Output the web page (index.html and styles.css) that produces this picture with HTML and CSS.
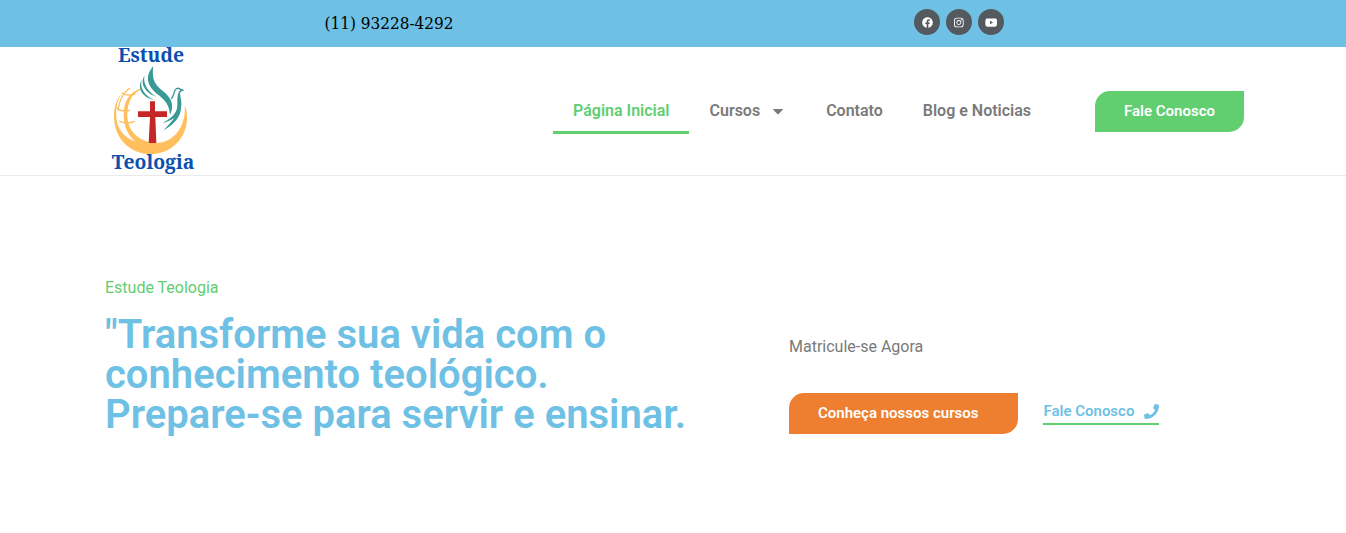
FILE: index.html
```html
<!DOCTYPE html>
<html lang="pt-BR">
<head>
<meta charset="utf-8">
<meta name="viewport" content="width=device-width, initial-scale=1">
<title>Estude Teologia</title>
<link rel="stylesheet" href="styles.css">
</head>
<body>
<div class="topbar">
  <div class="container topbar-grid">
    <a class="phone" href="tel:+5511932284292">(11) 93228-4292</a>
    <div class="social">
      <a href="#" aria-label="Facebook"><svg viewBox="0 0 512 512"><path d="M504 256C504 119 393 8 256 8S8 119 8 256c0 123.800 90.700 226.400 209.300 245V327.700h-63V256h63v-54.600c0-62.200 37-96.500 93.700-96.500 27.100 0 55.500 4.800 55.500 4.800v61h-31.300c-30.800 0-40.400 19.100-40.400 38.700V256h68.800l-11 71.700h-57.800V501C413.300 482.400 504 379.800 504 256z"/></svg></a>
      <a href="#" aria-label="Instagram"><svg viewBox="0 0 448 512"><path fill-rule="evenodd" d="M132 32h184a132 132 0 0 1 132 132v184a132 132 0 0 1-132 132H132A132 132 0 0 1 0 348V164A132 132 0 0 1 132 32zm4 40a95 95 0 0 0-95 95v178a95 95 0 0 0 95 95h176a95 95 0 0 0 95-95V167a95 95 0 0 0-95-95zM224 141a115 115 0 1 1 0 230 115 115 0 0 1 0-230zm0 40a75 75 0 1 0 0 150 75 75 0 0 0 0-150z"/><circle cx="344" cy="136" r="27"/></svg></a>
      <a href="#" aria-label="YouTube"><svg viewBox="0 0 576 512"><path fill-rule="evenodd" d="M549.700 124.100c-6.300-23.700-24.800-42.300-48.300-48.600C458.800 64 288 64 288 64S117.200 64 74.600 75.500c-23.500 6.300-42 24.900-48.300 48.600C15 167 15 256.400 15 256.400s0 89.400 11.400 132.300c6.300 23.700 24.800 41.500 48.300 47.800C117.200 448 288 448 288 448s170.800 0 213.400-11.500c23.500-6.300 42-24.200 48.300-47.800C561 345.800 561 256.400 561 256.400s0-89.400-11.300-132.300zM232 337.600V175.200l142.700 81.200z"/></svg></a>
    </div>
  </div>
</div>
<header class="header">
  <div class="container header-row">
    <a class="logo" href="#" aria-label="Estude Teologia">
      <svg viewBox="0 0 285 384">
        <text class="logo-text" x="138" y="44" text-anchor="middle">Estude</text>
        <g transform="translate(9 39)">
          <g fill="none" stroke="#ffbf5c" stroke-width="4">
            <path d="M65 84C44 100 33 124 30 152M96 88C72 97 57 119 51 145"/>
            <path d="M42 99C53 106 69 107 83 101M27 142C34 153 52 154 66 151M34 183C43 190 65 190 80 184"/>
          </g>
          <path fill="#ffbf5c" d="M48 92C28 110 17 139 18 173C20 238 68 282 128 282C190 282 237 234 237 173Q238 152 230 135C236 200 196 248 145 249C93 248 58 212 58 166C58 130 70 102 97 87C64 97 46 126 47 166C47 202 62 229 84 246C47 231 27 207 25 170C23 137 31 109 48 92Z"/>
          <path fill="#379a97" d="M136 18C130 64 143 75 171 98C192 118 199 138 186 165C184 137 174 124 153 106C123 84 105 54 136 18Z"/>
          <path fill="#379a97" d="M102 58C93 83 109 105 137 120C108 113 84 89 102 58ZM109 47C105 73 120 94 145 110C116 101 94 74 109 47Z"/>
          <path fill="none" stroke="#379a97" stroke-width="4" d="M190 116C201 105 195 88 208 85C214 83 218 91 227 91"/>
          <path fill="#379a97" d="M227 89L216 98C216 113 224 127 218 146C213 168 194 181 163 189C194 173 208 157 208 135C208 119 207 103 216 91ZM219 143C219 168 200 193 166 211C190 187 202 171 219 143Z"/>
          <path fill="#c42725" d="M126 124H141V154H177V171H142L145 249H122L126 171H90V154H126Z"/>
        </g>
        <text class="logo-text" x="144" y="365" text-anchor="middle">Teologia</text>
      </svg>
    </a>
    <nav class="nav">
      <a class="active" href="#">Página Inicial</a>
      <a href="#">Cursos <svg class="caret" viewBox="0 0 10 6"><path d="M1 0H9Q10.500 0 9.500 1L5.700 5Q5 5.700 4.300 5L.5 1Q-.5 0 1 0Z"/></svg></a>
      <a href="#">Contato</a>
      <a href="#">Blog e Noticias</a>
    </nav>
    <a class="btn btn-green" href="#">Fale Conosco</a>
  </div>
</header>
<main class="container hero">
  <section class="hero-copy">
    <p class="eyebrow">Estude Teologia</p>
    <h1>"Transforme sua vida com o conhecimento teológico. Prepare-se para servir e ensinar.</h1>
  </section>
  <section class="hero-cta">
    <p class="enroll">Matricule-se Agora</p>
    <div class="actions">
      <a class="btn btn-orange" href="#">Conheça nossos cursos</a>
      <a class="contact" href="#">Fale Conosco <svg viewBox="0 0 512 512"><path d="M493.400 24.600l-104-24c-11.300-2.600-22.900 3.300-27.500 13.900l-48 112c-4.200 9.800-1.400 21.300 6.900 28l60.600 49.600c-36 76.700-98.900 140.500-177.200 177.200l-49.600-60.600c-6.800-8.300-18.200-11.100-28-6.900l-112 48C3.900 366.500-2 378.100.6 389.400l24 104C27.100 504.200 36.700 512 48 512c256.100 0 464-207.500 464-464 0-11.200-7.700-20.900-18.600-23.400z"/></svg></a>
    </div>
  </section>
</main>
</body>
</html>
```
FILE: styles.css
```css
* { box-sizing: border-box; }
body { margin: 0; background: #fff; color: #7a7a7a; font: 400 16px/24px Roboto, sans-serif; }
a { color: inherit; text-decoration: none; }
p, h1 { margin: 0; }
svg { display: block; fill: currentColor; }
.container { width: 100%; max-width: 1142px; margin: 0 auto; padding-left: 2px; }

.topbar { background: #6ec1e4; }
.topbar-grid { display: grid; grid-template-columns: 1fr 1fr; justify-items: center; padding-top: 9px; padding-bottom: 12px; }
.phone { color: #000; font: 300 17px/28px "Roboto Slab", "DejaVu Serif Condensed", "DejaVu Serif", serif; height: 26px; }
.social { display: flex; gap: 6px; }
.social a { display: grid; place-items: center; width: 26px; height: 26px; border-radius: 50%; background: #54595f; color: #fff; }
.social svg { height: 11px; }

.header { border-bottom: 1px solid #eaeaea; }
.header-row { display: flex; align-items: center; }
.logo { margin-right: auto; padding-left: 1px; }
.logo svg { width: 95px; height: 128px; overflow: visible; }
.logo-text { fill: #0b4fb0; font: 700 58px "Noto Serif", "DejaVu Serif Condensed", "DejaVu Serif", serif; }
.nav { display: flex; margin-right: 44px; font-weight: 600; }
.nav a { display: flex; align-items: center; padding: 10px 20px 8px; border-bottom: 3px solid transparent; }
.nav .active { color: #61ce70; border-color: #61ce70; }
.caret { width: 10px; height: 6px; margin: 2px 3px 0 13px; }

.btn { display: block; border-radius: 15px 0; padding: 12px 29px; color: #fff; font-size: 15px; line-height: 17px; font-weight: 600; }
.btn-green { background: #61ce70; }
.btn-orange { background: #ee7f30; padding-right: 40px; }

.hero { display: grid; grid-template-columns: 3fr 2fr; align-items: start; padding-top: 100px; padding-bottom: 98px; }
.hero-copy { padding-left: 1px; }
.eyebrow { margin-bottom: 15px; color: #61ce70; }
h1 { max-width: 600px; color: #6ec1e4; font-size: 40px; line-height: 40px; font-weight: 600; }
.hero-cta { padding: 59px 0 0 1px; }
.enroll { margin-bottom: 34px; }
.actions { display: flex; align-items: center; gap: 25px; }
.contact { display: flex; align-items: center; gap: 10px; padding-bottom: 3px; border-bottom: 2px solid #61ce70; color: #6ec1e4; font-size: 15px; line-height: 17px; font-weight: 600; }
.contact svg { width: 15px; height: 15px; }
```
